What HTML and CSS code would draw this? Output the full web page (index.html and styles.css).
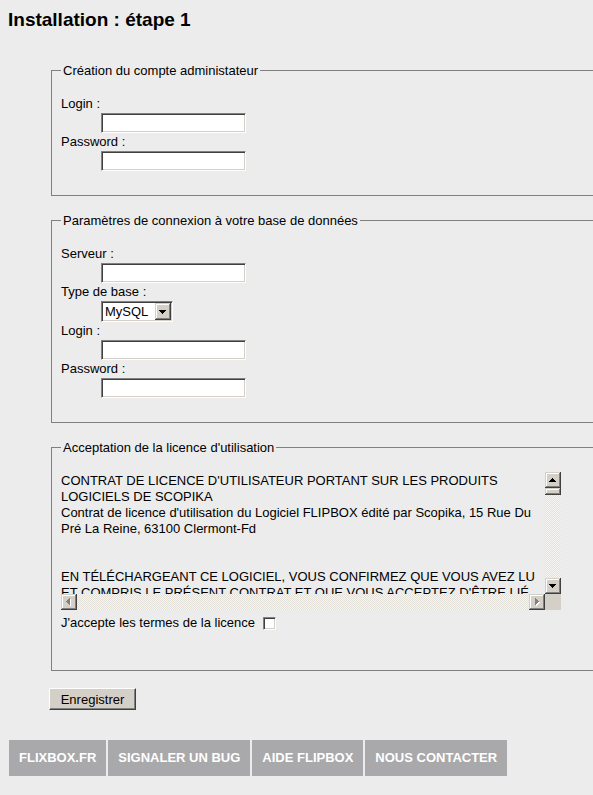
FILE: index.html
```html
<!DOCTYPE html>
<html lang="fr">
<head>
<meta charset="utf-8">
<title>Installation : étape 1</title>
<link rel="stylesheet" href="styles.css">
</head>
<body>
<h1 class="title">Installation : étape 1</h1>
<form class="install">
  <fieldset class="box">
    <legend>Création du compte administateur</legend>
    <label class="lbl" for="admin-login">Login :</label>
    <input class="field" id="admin-login" type="text">
    <label class="lbl" for="admin-pass">Password :</label>
    <input class="field" id="admin-pass" type="password">
  </fieldset>

  <fieldset class="box">
    <legend>Paramètres de connexion à votre base de données</legend>
    <label class="lbl" for="db-server">Serveur :</label>
    <input class="field" id="db-server" type="text">
    <label class="lbl" for="db-type">Type de base :</label>
    <div class="select-wrap">
      <select class="select" id="db-type"><option>MySQL</option></select>
      <span class="select-btn"><svg class="ico" viewBox="0 0 16 17" width="16" height="17"><path d="M4 7h7v1H4zM5 8h5v1H5zM6 9h3v1H6zM7 10h1v1H7z" fill="#000"/></svg></span>
    </div>
    <label class="lbl" for="db-login">Login :</label>
    <input class="field" id="db-login" type="text">
    <label class="lbl" for="db-pass">Password :</label>
    <input class="field" id="db-pass" type="password">
  </fieldset>

  <fieldset class="box">
    <legend>Acceptation de la licence d'utilisation</legend>
    <div class="license">
      <div class="license-text">CONTRAT DE LICENCE D'UTILISATEUR PORTANT SUR LES PRODUITS<br>LOGICIELS DE SCOPIKA<br>Contrat de licence d'utilisation du Logiciel FLIPBOX édité par Scopika, 15 Rue Du<br>Pré La Reine, 63100 Clermont-Fd<br><br><br>EN TÉLÉCHARGEANT CE LOGICIEL, VOUS CONFIRMEZ QUE VOUS AVEZ LU<br>ET COMPRIS LE PRÉSENT CONTRAT ET QUE VOUS ACCEPTEZ D'ÊTRE LIÉ<br>PAR SES TERMES.</div>
      <div class="vbar">
        <span class="sb-btn"><svg class="ico" viewBox="0 0 16 16" width="16" height="16"><path d="M7 6h1v1H7zM6 7h3v1H6zM5 8h5v1H5zM4 9h7v1H4z" fill="#000"/></svg></span>
        <span class="thumb"></span>
        <span class="track"></span>
        <span class="sb-btn"><svg class="ico" viewBox="0 0 16 16" width="16" height="16"><path d="M4 6h7v1H4zM5 7h5v1H5zM6 8h3v1H6zM7 9h1v1H7z" fill="#000"/></svg></span>
      </div>
      <div class="hbar">
        <span class="sb-btn"><svg class="ico" viewBox="0 0 16 16" width="16" height="16"><path d="M6 8h1v1H6zM7 7h1v3H7zM8 6h1v5H8zM9 5h1v7H9z" fill="#fff"/><path d="M5 7h1v1H5zM6 6h1v3H6zM7 5h1v5H7zM8 4h1v7H8z" fill="#808080"/></svg></span>
        <span class="track"></span>
        <span class="sb-btn"><svg class="ico" viewBox="0 0 16 16" width="16" height="16"><path d="M7 5h1v7H7zM8 6h1v5H8zM9 7h1v3H9zM10 8h1v1h-1z" fill="#fff"/><path d="M6 4h1v7H6zM7 5h1v5H7zM8 6h1v3H8zM9 7h1v1H9z" fill="#808080"/></svg></span>
      </div>
      <div class="corner"></div>
    </div>
    <div class="accept">
      <label for="accept-cb">J'accepte les termes de la licence</label>
      <input class="check" id="accept-cb" type="checkbox">
    </div>
  </fieldset>

  <button class="save" type="button">Enregistrer</button>
</form>

<nav class="links">
  <a href="#">FLIXBOX.FR</a>
  <a href="#">SIGNALER UN BUG</a>
  <a href="#">AIDE FLIPBOX</a>
  <a href="#">NOUS CONTACTER</a>
</nav>
</body>
</html>
```

FILE: styles.css
```css
html {
  background: #ececec;
  overflow: hidden;
}

body {
  margin: 0;
  padding: 8px 8px 0;
  font-family: "Liberation Sans", Arial, sans-serif;
  font-size: 13px;
  color: #000;
}

.title {
  margin: 0;
  padding-top: 1px;
  font-size: 19px;
  line-height: 22px;
  font-weight: bold;
}

.install {
  margin: 0;
}

.box {
  margin: 31px -40px 0 43px;
  padding: 17px 9px 24px;
  border: 1px solid #808080;
  min-width: 0;
}

.box + .box {
  margin-top: 16px;
}

.box legend {
  margin: 0;
  padding: 2px 2px 0;
  line-height: 14px;
}

.lbl {
  display: block;
  height: 18px;
  line-height: 18px;
}

.field {
  display: block;
  box-sizing: border-box;
  width: 145px;
  height: 20px;
  margin: 0 0 0 40px;
  padding: 0 3px;
  border: 1px solid;
  border-color: #808080 #ffffff #ffffff #808080;
  box-shadow: inset 1px 1px #404040, inset -1px -1px #d4d0c8;
  background: #fff;
  font: 13px "Liberation Sans", Arial, sans-serif;
  outline: none;
}

.select-wrap {
  position: relative;
  width: 72px;
  height: 21px;
  margin-left: 40px;
}

.select {
  -webkit-appearance: none;
  appearance: none;
  display: block;
  box-sizing: border-box;
  width: 100%;
  height: 100%;
  margin: 0;
  padding: 0 18px 0 3px;
  border: 1px solid;
  border-color: #808080 #ffffff #ffffff #808080;
  box-shadow: inset 1px 1px #404040, inset -1px -1px #d4d0c8;
  border-radius: 0;
  background: #fff;
  color: #000;
  font: 13px "Liberation Sans", Arial, sans-serif;
  outline: none;
}

.select-btn {
  position: absolute;
  top: 2px;
  right: 2px;
  width: 16px;
  height: 17px;
  background: #d4d0c8;
  box-shadow: inset -1px -1px #404040, inset 1px 1px #d4d0c8, inset -2px -2px #808080, inset 2px 2px #ffffff;
}

.ico {
  display: block;
  shape-rendering: crispEdges;
}

.license {
  display: grid;
  grid-template-columns: 484px 16px;
  grid-template-rows: 122px 16px;
  width: 500px;
}

.license-text {
  padding-top: 1px;
  line-height: 16px;
  white-space: nowrap;
  overflow: hidden;
}

.vbar {
  display: flex;
  flex-direction: column;
}

.hbar {
  display: flex;
}

.sb-btn {
  flex: none;
  width: 16px;
  height: 16px;
  background: #d4d0c8;
  box-shadow: inset -1px -1px #404040, inset 1px 1px #d4d0c8, inset -2px -2px #808080, inset 2px 2px #ffffff;
}

.thumb {
  flex: none;
  height: 7px;
  background: #d4d0c8;
  box-shadow: inset -1px -1px #404040, inset 1px 1px #d4d0c8, inset -2px -2px #808080, inset 2px 2px #ffffff;
}

.track {
  flex: 1;
  background: repeating-conic-gradient(#e4e1db 0 25%, #f6f5f2 0 50%) 0 0 / 2px 2px;
}

.corner {
  background: #d4d0c8;
}

.accept {
  display: flex;
  align-items: center;
  margin: 6px 0 16px;
  line-height: 14px;
}

.check {
  -webkit-appearance: none;
  appearance: none;
  box-sizing: border-box;
  width: 13px;
  height: 13px;
  margin: 0 0 0 8px;
  border: 1px solid;
  border-color: #808080 #ffffff #ffffff #808080;
  box-shadow: inset 1px 1px #404040, inset -1px -1px #d4d0c8;
  background: #fff;
}

.save {
  display: block;
  box-sizing: border-box;
  width: 87px;
  height: 22px;
  margin: 17px 0 0 41px;
  padding: 0;
  background: #d4d0c8;
  border: 1px solid;
  border-color: #ffffff #404040 #404040 #ffffff;
  box-shadow: inset -1px -1px #808080;
  border-radius: 0;
  color: #000;
  font: 13px "Liberation Sans", Arial, sans-serif;
}

.links {
  display: flex;
  gap: 2px;
  margin: 30px 0 0 1px;
}

.links a {
  height: 36px;
  line-height: 36px;
  padding: 0 10px;
  background: #a9a9ab;
  color: #fff;
  font-weight: bold;
  font-size: 13px;
  text-decoration: none;
}
```
